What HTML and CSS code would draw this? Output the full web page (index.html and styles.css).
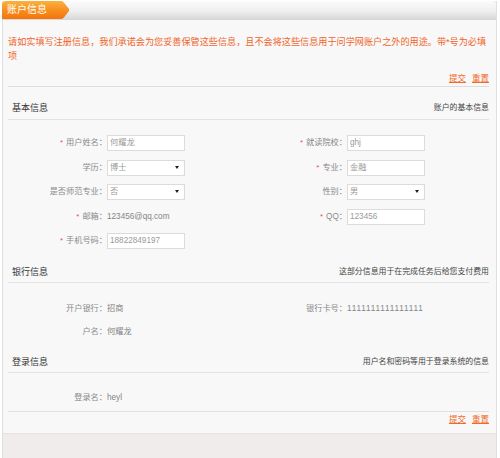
FILE: index.html
```html
<!DOCTYPE html>
<html lang="zh-CN">
<head>
<meta charset="utf-8">
<title>账户信息</title>
<link rel="stylesheet" href="styles.css">
</head>
<body>
<div class="frame">
  <div class="header"><div class="tab">账户信息</div></div>
  <div class="content">
    <div class="top">
      <p class="notice">请如实填写注册信息，我们承诺会为您妥善保管这些信息，且不会将这些信息用于问学网账户之外的用途。带*号为必填项</p>
      <div class="actions"><a href="#">提交</a><a href="#">重置</a></div>
    </div>

    <div class="sec-head first"><span class="sec-title">基本信息</span><span class="sec-desc">账户的基本信息</span></div>
    <div class="grid basic">
      <span class="lbl"><i class="req">*</i>用户姓名：</span><span class="inp">何耀龙</span>
      <span class="lbl"><i class="req">*</i>就读院校：</span><span class="inp">ghj</span>

      <span class="lbl">学历：</span><span class="inp sel">博士</span>
      <span class="lbl"><i class="req">*</i>专业：</span><span class="inp">金融</span>

      <span class="lbl">是否师范专业：</span><span class="inp sel">否</span>
      <span class="lbl">性别：</span><span class="inp sel">男</span>

      <span class="lbl"><i class="req">*</i>邮箱：</span><span class="val">123456@qq.com</span>
      <span class="lbl"><i class="req">*</i>QQ：</span><span class="inp">123456</span>

      <span class="lbl"><i class="req">*</i>手机号码：</span><span class="inp">18822849197</span>
      <span></span><span></span>
    </div>

    <div class="sec-head bank-head"><span class="sec-title">银行信息</span><span class="sec-desc">这部分信息用于在完成任务后给您支付费用</span></div>
    <div class="grid bank">
      <span class="lbl">开户银行：</span><span class="val">招商</span>
      <span class="lbl">银行卡号：</span><span class="val card">1111111111111111</span>

      <span class="lbl">户名：</span><span class="val">何耀龙</span>
      <span></span><span></span>
    </div>

    <div class="sec-head login-head"><span class="sec-title">登录信息</span><span class="sec-desc">用户名和密码等用于登录系统的信息</span></div>
    <div class="login-body">
      <div class="grid login">
        <span class="lbl">登录名：</span><span class="val">heyl</span>
        <span></span><span></span>
      </div>
    </div>
    <div class="actions bottom"><a href="#">提交</a><a href="#">重置</a></div>
  </div>
  <div class="footer"></div>
</div>
</body>
</html>
```

FILE: styles.css
```css
html, body {
  margin: 0;
  padding: 0;
  background: #ffffff;
}

body {
  font-family: "Liberation Sans", "Noto Sans CJK SC", sans-serif;
}

.frame {
  margin: 1px 0 0 2px;
  width: 495px;
  height: 457px;
  box-sizing: border-box;
  border-left: 1px solid #e0e0e0;
  border-right: 1px solid #e0e0e0;
  background: #f0ecec;
  display: flex;
  flex-direction: column;
}

.header {
  height: 19px;
  flex: none;
  background: linear-gradient(#fbfbfb 0%, #eeeeee 55%, #d6d6d6 100%);
  border-top-right-radius: 4px;
}

.tab {
  position: relative;
  margin-left: -1px;
  width: 60px;
  height: 18px;
  box-sizing: border-box;
  padding-left: 5px;
  border-top-left-radius: 4px;
  background: linear-gradient(#fbb23f 0%, #f7901f 50%, #f3740c 100%);
  color: #ffffff;
  font-size: 10px;
  line-height: 18px;
  white-space: nowrap;
}

.tab::after {
  content: "";
  position: absolute;
  left: 100%;
  top: 0;
  width: 7px;
  height: 18px;
  background: linear-gradient(#fbb23f 0%, #f7901f 50%, #f3740c 100%);
  clip-path: polygon(0 0, 30% 10%, 100% 45%, 100% 55%, 30% 90%, 0 100%);
}

.content {
  flex: none;
  background: #f8f8f8;
  padding: 0 7px 0 5px;
  border-bottom: 1px solid #e6e2e2;
}

.top {
  padding-bottom: 2px;
  border-bottom: 1px solid #dddddd;
}

.notice {
  margin: 0;
  padding-top: 15px;
  font-size: 9.15px;
  line-height: 14px;
  color: #f0642a;
}

.actions {
  display: flex;
  justify-content: flex-end;
  gap: 6px;
  font-size: 8.5px;
  line-height: 12px;
}

.top .actions {
  margin-top: 9px;
}

.actions a {
  color: #f26a2a;
  text-decoration: underline;
}

.actions.bottom {
  padding: 1px 0 8px;
}

.sec-head {
  display: flex;
  justify-content: space-between;
  align-items: center;
  padding: 15px 0 5px 4px;
  line-height: 12px;
  border-bottom: 1px solid #e3e3e3;
}

.sec-head.bank-head {
  padding-top: 17px;
  padding-bottom: 4px;
}

.sec-head.login-head {
  padding-top: 16px;
  padding-bottom: 4px;
}

.sec-title {
  font-size: 9px;
  color: #333333;
}

.sec-desc {
  font-size: 7.9px;
  color: #444444;
}

.grid {
  display: grid;
  grid-template-columns: 99px 142px 98px 1fr;
  grid-auto-rows: 16px;
  align-items: center;
  font-size: 8.2px;
  color: #8a8a8a;
}

.grid.basic {
  margin-top: 15px;
  row-gap: 8.5px;
}

.grid.bank {
  margin-top: 18px;
  row-gap: 7px;
}

.grid.login {
  margin-top: 17px;
}

.login-body {
  padding-bottom: 5px;
  border-bottom: 1px solid #e0e0e0;
}

.lbl {
  text-align: right;
  white-space: nowrap;
  line-height: 16px;
}

.req {
  font-style: normal;
  color: #f05050;
  font-size: 8px;
  margin-right: 3px;
}

.val {
  color: #858585;
  white-space: nowrap;
  line-height: 16px;
}

.val.card {
  letter-spacing: 0.8px;
}

.inp {
  position: relative;
  display: block;
  width: 78px;
  height: 16px;
  box-sizing: border-box;
  border: 1px solid #dcdcdc;
  background: #ffffff;
  color: #9a9a9a;
  padding-left: 2px;
  line-height: 14px;
  white-space: nowrap;
}

.sel::after {
  content: "";
  position: absolute;
  right: 5px;
  top: 5px;
  width: 0;
  height: 0;
  border-left: 2.5px solid transparent;
  border-right: 2.5px solid transparent;
  border-top: 3.5px solid #1e1e1e;
}

.footer {
  flex: 1;
  background: #f0ecec;
}
```
